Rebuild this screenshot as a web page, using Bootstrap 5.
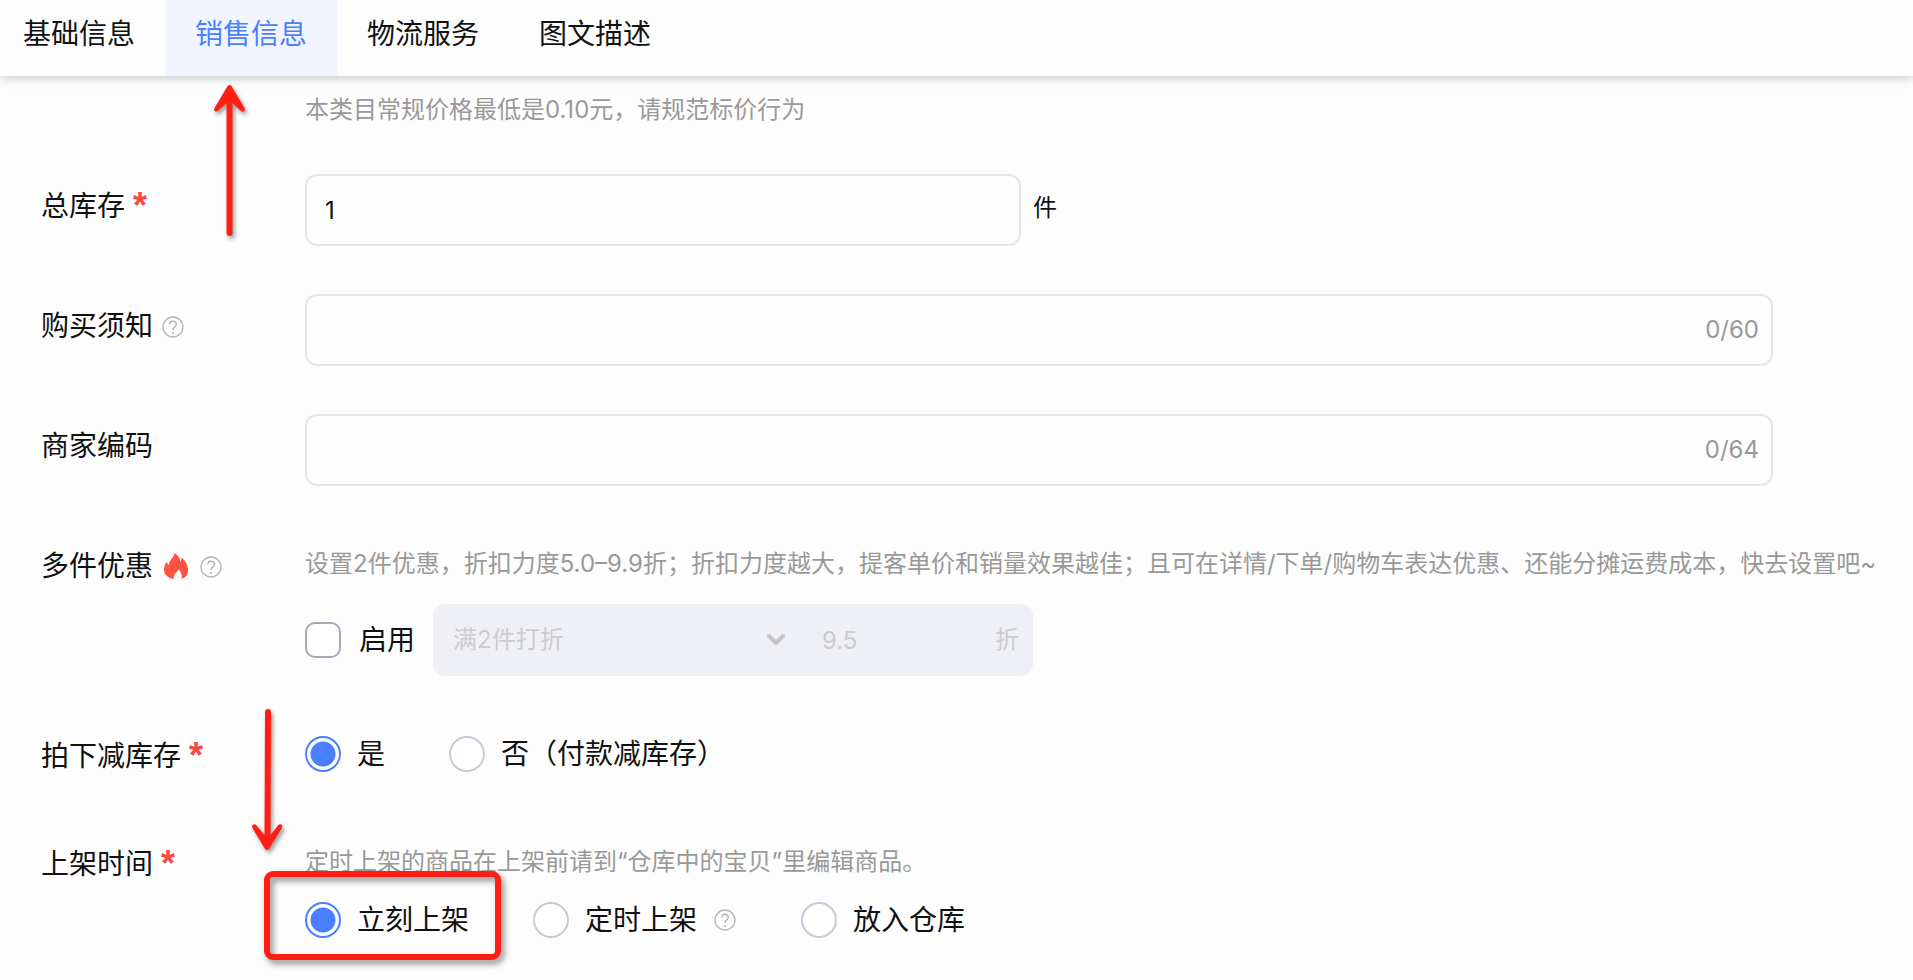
<!DOCTYPE html>
<html lang="zh-CN">
<head>
<meta charset="utf-8">
<meta name="viewport" content="width=device-width, initial-scale=1">
<title>销售信息</title>
<link href="https://cdn.jsdelivr.net/npm/bootstrap@5.3.0/dist/css/bootstrap.min.css" rel="stylesheet">
<style>
  body { background: #fdfdfd; color: #111; font-family: Inter, "Noto Sans CJK SC", sans-serif; font-size: 28px; line-height: 36px; }
  .top-tabs { height: 76px; background: #fdfdfd; box-shadow: 0 2px 10px rgba(0,0,0,.22); position: relative; z-index: 1; }
  .top-tabs .nav-link { color: #111; padding: 16px 30px 24px; border-radius: 0; }
  .top-tabs .nav-item:first-child .nav-link { padding-left: 23px; }
  .top-tabs .nav-link.active { color: #4a80ff; background: #f2f5ff; }
  main { padding: 16px 0 36px 41px; }
  .field-name { width: 264px; flex: none; padding-top: 14px; }
  .field-row { min-height: 60px; margin-bottom: 48px; }
  .field-body { min-width: 0; }
  .hint { font-size: 24px; color: #999; white-space: nowrap; }
  .hint-top { margin: 0 0 46px 264px; }
  .pad-top { padding-top: 12px; }
  .line-gap { margin-top: 22px; }
  .req { color: #ff4545; font-family: "Liberation Sans", sans-serif; font-size: 36px; font-weight: bold; margin-left: 8px; }
  .help-mark { margin-top: 7px; }
  .flame { margin-top: 5px; }
  .text-field { height: 72px; border: 2px solid #e4e5ed; border-radius: 12px; background: transparent; font-size: 24px; color: #111; padding: 0 18px; display: block; }
  .stock { max-width: 716px; }
  .wide { margin-right: 140px; }
  .counter { right: 14px; top: 18px; color: #999; font-size: 24px; }
  .unit { font-size: 24px; margin-left: 12px; padding-bottom: 4px; }
  .tick.form-check-input { width: 36px; height: 36px; margin: 0; border: 2px solid #a6a8b8; background-color: #fff; flex: none; }
  .tick.form-check-input[type=checkbox] { border-radius: 10px; }
  .tick.form-check-input[type=radio] { border-color: #c8c9d6; }
  .tick.form-check-input[type=radio]:checked { border-color: #4a80ff; background: radial-gradient(circle, #4a80ff 12px, #fff 13px); }
  .choice { gap: 16px; position: relative; }
  .enable { gap: 18px; }
  .choices { gap: 64px; }
  .discount { width: 600px; height: 72px; margin-left: 18px; background: #eff0f5; border-radius: 12px; color: #ccc; font-size: 24px; padding-right: 14px; }
  .discount select, .discount input { border: 0; background: transparent; color: #ccc; opacity: 1; padding: 0 20px; font-size: 24px; height: 72px; appearance: none; }
  .discount select { width: 369px; }
  .chev { right: 16px; top: 28px; }
  .arrow { pointer-events: none; filter: drop-shadow(2px 3px 2px rgba(0,0,0,.4)); z-index: 2; }
  .arrow-up { left: 209px; top: 80px; }
  .arrow-down { left: 247px; top: 704px; }
  .frame { left: -41px; right: -32px; top: -31px; bottom: -22px; border: 6px solid #ff1e14; border-radius: 9px; pointer-events: none; filter: drop-shadow(3px 4px 3px rgba(0,0,0,.45)); }
</style>
</head>
<body class="position-relative">
<svg class="d-none" aria-hidden="true">
  <symbol id="help" viewBox="0 0 24 24"><circle cx="12" cy="12" r="10" fill="none" stroke="#b3b3b3" stroke-width="1.3"/><path d="M8.8 9.3C8.8 7.2 10.200 6.200 12 6.200s3.300 1.100 3.300 3c0 2.500-3.300 2.700-3.300 5.800" fill="none" stroke="#b3b3b3" stroke-width="1.400"/><circle cx="12" cy="18" r="1.100" fill="#b3b3b3"/></symbol>
</svg>

<nav class="top-tabs">
  <ul class="nav flex-nowrap">
    <li class="nav-item"><a class="nav-link" href="#basic">基础信息</a></li>
    <li class="nav-item"><a class="nav-link active" href="#sales" aria-current="page">销售信息</a></li>
    <li class="nav-item"><a class="nav-link" href="#logistics">物流服务</a></li>
    <li class="nav-item"><a class="nav-link" href="#detail">图文描述</a></li>
  </ul>
</nav>

<main id="sales">
  <div class="hint hint-top">本类目常规价格最低是0.10元，请规范标价行为</div>

  <div class="field-row d-flex">
    <label class="field-name d-flex" for="stock">总库存<span class="req">*</span></label>
    <div class="field-body flex-fill d-flex align-items-center">
      <input id="stock" class="text-field stock w-100" type="text" value="1"><span class="unit">件</span>
    </div>
  </div>

  <div class="field-row d-flex">
    <div class="field-name d-flex align-items-start"><label for="notice">购买须知</label><svg class="help-mark ms-2" width="24" height="24"><use href="#help"/></svg></div>
    <div class="field-body wide flex-fill position-relative">
      <input id="notice" class="text-field w-100" type="text" maxlength="60"><span class="counter position-absolute">0/60</span>
    </div>
  </div>

  <div class="field-row d-flex">
    <label class="field-name" for="code">商家编码</label>
    <div class="field-body wide flex-fill position-relative">
      <input id="code" class="text-field w-100" type="text" maxlength="64"><span class="counter position-absolute">0/64</span>
    </div>
  </div>

  <div class="field-row d-flex">
    <div class="field-name d-flex align-items-start"><span>多件优惠</span>
      <svg class="flame ms-2" width="30" height="28" viewBox="0 0 30 28"><path d="M13.500 0C17.500 2.500 19 5.500 19.300 8.800c.9-1.300 1.300-2.700 1.100-4.300C25.500 8.500 27 13 27 17.500c0 4-2.200 6.900-6.300 8.500.8-4-.6-7-3.400-9.500-.4 1.500-1.400 2.300-2.600 3.500-1.700 1.800-2.300 3.500-1.800 6C6.500 25 3 21.500 3 16.500c0-3.200 1.100-5.800 3-7.700.3 1.500.8 2.600 1.700 3.500C8 7 12.500 5.500 13.500 0z" fill="#ff5243"/></svg>
      <svg class="help-mark ms-2" width="24" height="24"><use href="#help"/></svg>
    </div>
    <div class="field-body flex-fill pad-top">
      <div class="hint">设置2件优惠，折扣力度5.0–9.9折；折扣力度越大，提客单价和销量效果越佳；且可在详情/下单/购物车表达优惠、还能分摊运费成本，快去设置吧~</div>
      <div class="d-flex align-items-center line-gap">
        <label class="choice enable d-flex align-items-center"><input class="form-check-input tick" type="checkbox">启用</label>
        <div class="discount d-flex align-items-center">
          <div class="position-relative">
            <select class="d-block" disabled aria-label="优惠条件"><option>满2件打折</option></select>
            <svg class="chev position-absolute" width="20" height="16" viewBox="0 0 20 16"><path d="M3 4l7 7 7-7" fill="none" stroke="#c4c4c4" stroke-width="4" stroke-linecap="round" stroke-linejoin="round"/></svg>
          </div>
          <input class="flex-fill w-50" type="text" value="9.5" disabled aria-label="折扣"><span>折</span>
        </div>
      </div>
    </div>
  </div>

  <div class="field-row d-flex">
    <div class="field-name d-flex">拍下减库存<span class="req">*</span></div>
    <div class="field-body choices d-flex align-items-start pad-top">
      <label class="choice d-flex align-items-center"><input class="form-check-input tick" type="radio" name="deduct" checked>是</label>
      <label class="choice d-flex align-items-center"><input class="form-check-input tick" type="radio" name="deduct">否（付款减库存）</label>
    </div>
  </div>

  <div class="field-row d-flex mb-0">
    <div class="field-name d-flex">上架时间<span class="req">*</span></div>
    <div class="field-body pad-top">
      <div class="hint">定时上架的商品在上架前请到“仓库中的宝贝”里编辑商品。</div>
      <div class="choices d-flex line-gap">
        <label class="choice d-flex align-items-center"><input class="form-check-input tick" type="radio" name="shelf" checked>立刻上架<span class="frame position-absolute"></span></label>
        <label class="choice d-flex align-items-center"><input class="form-check-input tick" type="radio" name="shelf">定时上架<svg width="24" height="24"><use href="#help"/></svg></label>
        <label class="choice d-flex align-items-center"><input class="form-check-input tick" type="radio" name="shelf">放入仓库</label>
      </div>
    </div>
  </div>
</main>

<svg class="arrow arrow-up position-absolute" width="42" height="162" viewBox="0 0 42 162"><path d="M20.500 5c1.500 0 2 1 2.500 2l12.500 21c1.500 3-2 5-4 2.500L23.500 23v130a3 3 0 0 1-6 0V23l-8 7.500c-2 2.500-5.500.5-4-2.500L18 7c.5-1 1-2 2.500-2z" fill="#ff1e14"/></svg>
<svg class="arrow arrow-down position-absolute" width="42" height="152" viewBox="0 0 42 152"><path d="M20 146c-1.500 0-2-1-2.500-2L5.500 124c-1.500-3 2-5 4-2.500L17.500 131 18 8a3 3 0 0 1 6 0l-.5 123 7.500-9.500c2-2.500 5.500-.5 4 2.500L22.500 144c-.5 1-1 2-2.500 2z" fill="#ff1e14"/></svg>
<script src="https://cdn.jsdelivr.net/npm/bootstrap@5.3.0/dist/js/bootstrap.bundle.min.js"></script>
</body>
</html>
